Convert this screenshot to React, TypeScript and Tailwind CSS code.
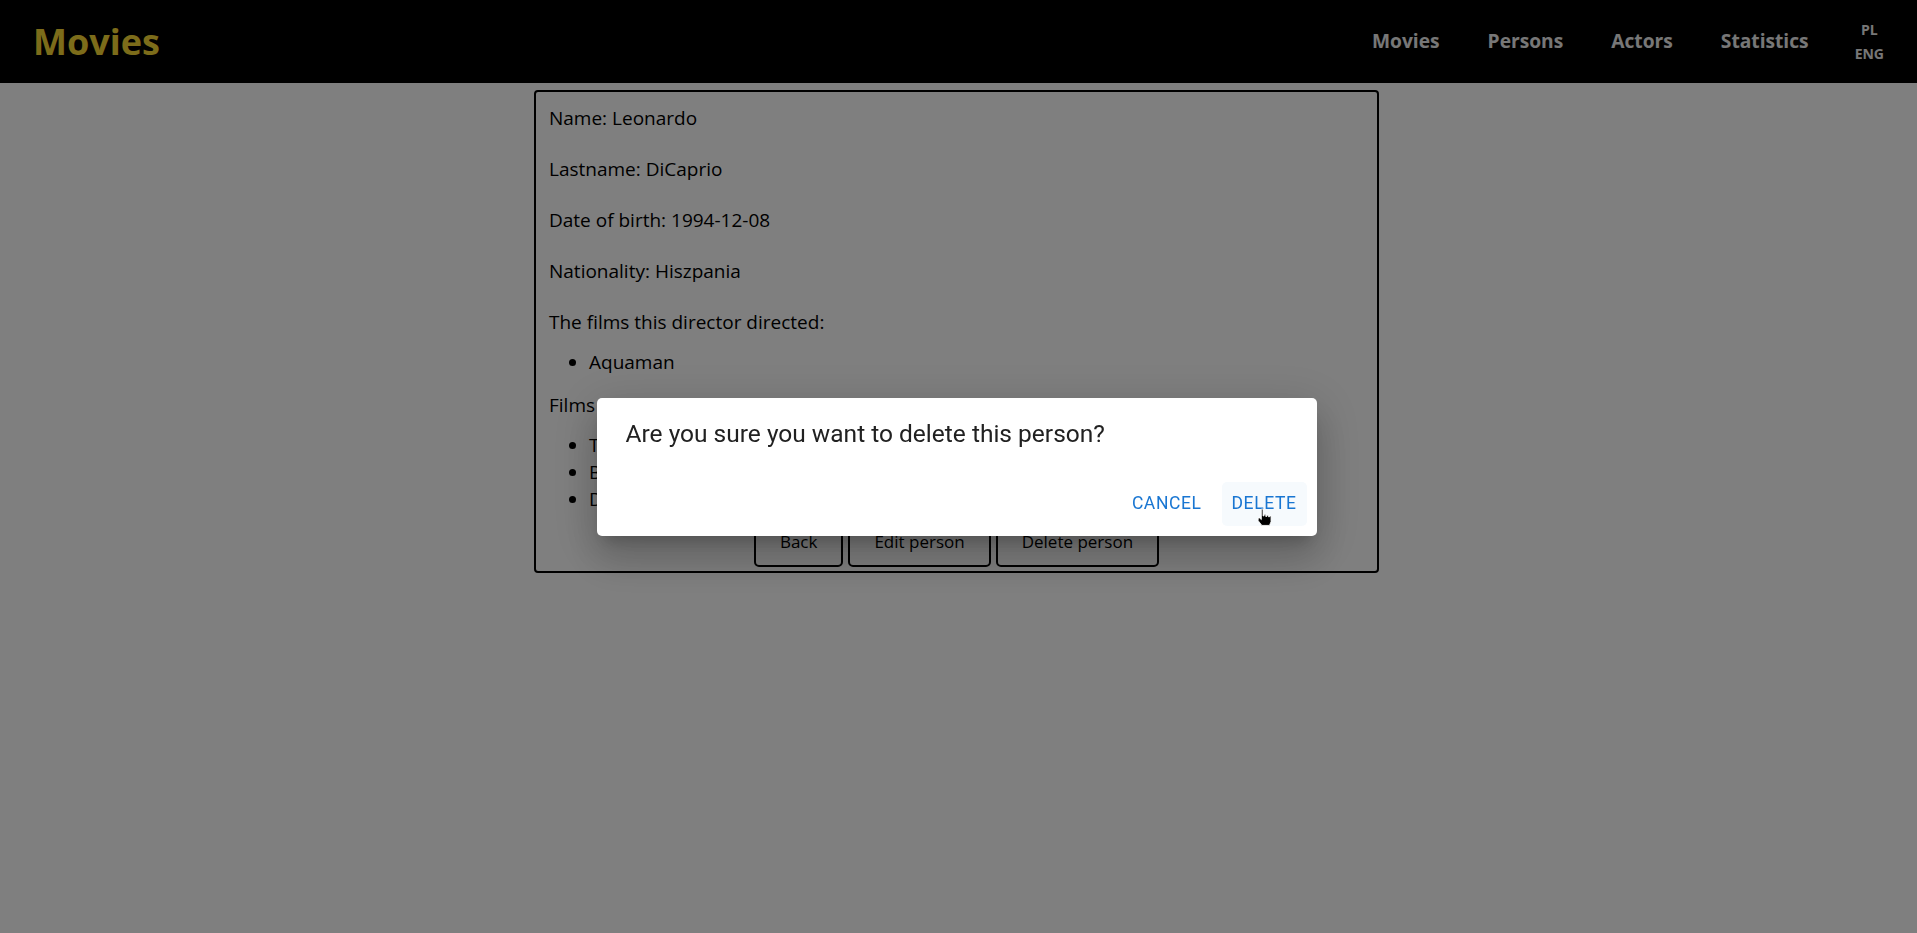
import React from "react";

const navLinks = ["Movies", "Persons", "Actors", "Statistics"];

const person = {
  name: "Leonardo",
  lastname: "DiCaprio",
  birth: "1994-12-08",
  nationality: "Hiszpania",
  directed: ["Aquaman"],
  played: ["Titanic", "Blood Diamond", "Django"],
};

function Header() {
  return (
    <header className="flex h-[83px] items-center justify-between bg-black px-[33px] font-['Open_Sans',sans-serif]">
      <a className="text-[36px] font-bold text-[#f8d934]">Movies</a>
      <nav className="flex items-center">
        {navLinks.map((link) => (
          <a key={link} className="px-[24px] text-[19.2px] font-bold text-[#eeeeee]">
            {link}
          </a>
        ))}
        <div className="ml-[22px] flex flex-col items-center text-[14px] font-bold leading-[24px] text-[#eeeeee]">
          <span>PL</span>
          <span>ENG</span>
        </div>
      </nav>
    </header>
  );
}

function CardButton({ label }: { label: string }) {
  return (
    <button className="rounded-[5px] border-2 border-black bg-transparent px-[24px] py-[9px] text-[17px] leading-[28px] text-black">
      {label}
    </button>
  );
}

function PersonDetails() {
  return (
    <div className="flex justify-center pr-[4px]">
      <div className="mt-[7px] w-[845px] rounded-[4px] border-2 border-black px-[13px] pt-[13px] pb-[4px] font-['Open_Sans',sans-serif] text-[19px] leading-[27px] text-black">
        <p className="mb-[24px]">Name: {person.name}</p>
        <p className="mb-[24px]">Lastname: {person.lastname}</p>
        <p className="mb-[24px]">Date of birth: {person.birth}</p>
        <p className="mb-[24px]">Nationality: {person.nationality}</p>
        <p>The films this director directed:</p>
        <ul className="mt-[13px] mb-[16px] list-disc pl-10">
          {person.directed.map((f) => (
            <li key={f}>{f}</li>
          ))}
        </ul>
        <p>Films this actor played in:</p>
        <ul className="mt-[13px] list-disc pl-10">
          {person.played.map((f) => (
            <li key={f}>{f}</li>
          ))}
        </ul>
        <div className="mt-[4px] flex justify-center gap-[5px]">
          <CardButton label="Back" />
          <CardButton label="Edit person" />
          <CardButton label="Delete person" />
        </div>
      </div>
    </div>
  );
}

function HandCursor() {
  return (
    <svg
      className="absolute left-[34px] top-[26px]"
      width="17"
      height="19"
      viewBox="0 0 16 18"
    >
      <path
        d="M5 1h1.6v6.5h1V6h1.6v2h1V6.8h1.6v1.5h1V7.5h1.4V13l-1.5 3.5H5.5L2 12V9.5h1.4L5 11z"
        fill="black"
        stroke="white"
        strokeWidth="0.8"
      />
    </svg>
  );
}

function ConfirmDialog() {
  return (
    <div className="fixed inset-0 flex items-center justify-center bg-black/50 pr-[4px] font-['Roboto',sans-serif]">
      <div className="flex w-[720px] flex-col rounded-[5px] bg-white shadow-[0px_11px_15px_-7px_rgba(0,0,0,0.2),0px_24px_38px_3px_rgba(0,0,0,0.14),0px_9px_46px_8px_rgba(0,0,0,0.12)]">
        <h2 className="px-[29px] pt-[17px] text-[24.5px] font-normal leading-[38px] text-[#212121]">
          Are you sure you want to delete this person?
        </h2>
        <div className="mt-[29px] flex justify-end gap-[10px] pr-[10px] pb-[10px]">
          <button className="h-[44px] min-w-[77px] rounded-[5px] px-[10px] text-[17.5px] font-normal uppercase tracking-[0.6px] text-[#1976d2]">
            Cancel
          </button>
          <button className="relative h-[44px] min-w-[77px] rounded-[5px] bg-[#1976d2]/[0.04] px-[10px] text-[17.5px] font-normal uppercase tracking-[0.6px] text-[#1976d2]">
            Delete
            <HandCursor />
          </button>
        </div>
      </div>
    </div>
  );
}

export default function App() {
  return (
    <div className="min-h-screen bg-white">
      <Header />
      <PersonDetails />
      <ConfirmDialog />
    </div>
  );
}
